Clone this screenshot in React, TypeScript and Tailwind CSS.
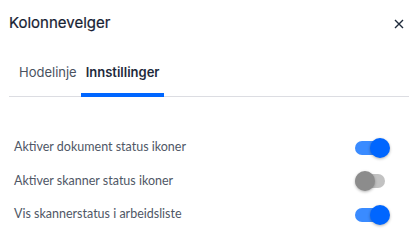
import { useState } from "react";

const rows = [
  { label: "Aktiver dokument status ikoner", on: true },
  { label: "Aktiver skanner status ikoner", on: false },
  { label: "Vis skannerstatus i arbeidsliste", on: true },
];

function Toggle({ on }: { on: boolean }) {
  return (
    <div className="relative w-[35px] h-[20px] flex items-center">
      <div
        className={
          on
            ? "absolute left-0 right-[5px] h-[14px] rounded-full bg-[#3a8bff]"
            : "absolute left-0 right-[5px] h-[14px] rounded-full bg-[#c2c2c2]"
        }
      />
      <div
        className={
          on
            ? "absolute right-0 w-[20px] h-[20px] rounded-full bg-[#0066ff] shadow-[0_1px_3px_rgba(0,0,0,0.3)]"
            : "absolute left-0 w-[20px] h-[20px] rounded-full bg-[#8c8c8c] shadow-[0_1px_3px_rgba(0,0,0,0.3)]"
        }
      />
    </div>
  );
}

export default function App() {
  const [tab] = useState(1);
  return (
    <div className="w-[418px] h-[252px] bg-white" style={{ fontFamily: "Inter, sans-serif" }}>
      <div className="flex items-center justify-between pl-[9px] pr-[14px] pt-[8px] h-[38px]">
        <h1 className="text-[15px] font-normal text-[#172233] [-webkit-text-stroke:0.2px_#172233]">Kolonnevelger</h1>
        <svg width="10" height="10" viewBox="0 0 10 10" className="mt-[2px]">
          <path d="M1 1L9 9M9 1L1 9" stroke="#1e2a3b" strokeWidth="1.4" />
        </svg>
      </div>
      <div className="mx-[9px] mt-[25px] flex border-b border-[#dcdde2] pl-[4px]">
        {["Hodelinje", "Innstillinger"].map((t, i) => (
          <div
            key={t}
            className={
              i === tab
                ? "px-[5px] pb-[9px] text-[13px] font-semibold text-[#1e2a3b] border-b-[4px] border-[#0066ff] -mb-px"
                : "pl-[6px] pr-[4px] pb-[13px] text-[13px] text-[#4a5260]"
            }
          >
            {t}
          </div>
        ))}
      </div>
      <div className="flex flex-col pt-[41px] pl-[14px] pr-[28px] gap-[13.5px]" style={{ fontFamily: "Lato, sans-serif" }}>
        {rows.map((r) => (
          <div key={r.label} className="flex items-center justify-between h-[20px]">
            <span className="text-[12.5px] text-[#4f5766]">{r.label}</span>
            <Toggle on={r.on} />
          </div>
        ))}
      </div>
    </div>
  );
}
